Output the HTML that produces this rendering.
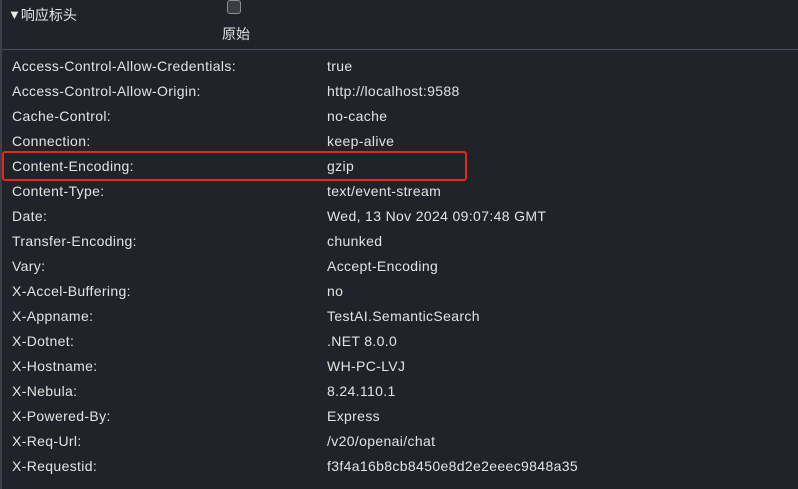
<!DOCTYPE html>
<html><head><meta charset="utf-8"><style>
html,body{margin:0;padding:0;}
body{width:798px;height:489px;background:#202329;position:relative;overflow:hidden;font-family:"Liberation Sans","Noto Sans CJK SC",sans-serif;color:#e3e3e3;font-size:14px;}
.lb{position:absolute;left:0;top:0;width:2px;height:489px;background:#3c4048;}
.hd{position:absolute;left:8px;top:5px;font-size:14px;color:#e8e8e8;}
.cb{position:absolute;left:227px;top:0px;width:12px;height:12px;border:1px solid #8a8d93;border-radius:3px;background:#3a3d44;}
.yuan{position:absolute;left:222px;top:24px;font-size:14px;}
.hr{position:absolute;left:2px;right:0;top:49px;height:1px;background:#4a4f57;}
.row{position:absolute;left:12px;height:20px;line-height:20px;white-space:nowrap;letter-spacing:0.35px;}
.row span{position:absolute;left:315px;}
.box{position:absolute;left:2px;top:151px;width:461px;height:26px;border:2px solid #e8261f;border-radius:3px;}
</style></head><body>
<div class="lb"></div>
<div class="hd"><span style="font-size:13px;position:relative;top:-1px">▼</span>响应标头</div>
<div class="cb"></div>
<div class="yuan">原始</div>
<div class="hr"></div>
<div class="row" style="top:56px">Access-Control-Allow-Credentials:<span>true</span></div>
<div class="row" style="top:81px">Access-Control-Allow-Origin:<span>http://localhost:9588</span></div>
<div class="row" style="top:106px">Cache-Control:<span>no-cache</span></div>
<div class="row" style="top:131px">Connection:<span>keep-alive</span></div>
<div class="row" style="top:156px">Content-Encoding:<span>gzip</span></div>
<div class="row" style="top:181px">Content-Type:<span>text/event-stream</span></div>
<div class="row" style="top:206px">Date:<span>Wed, 13 Nov 2024 09:07:48 GMT</span></div>
<div class="row" style="top:231px">Transfer-Encoding:<span>chunked</span></div>
<div class="row" style="top:256px">Vary:<span>Accept-Encoding</span></div>
<div class="row" style="top:281px">X-Accel-Buffering:<span>no</span></div>
<div class="row" style="top:306px">X-Appname:<span>TestAI.SemanticSearch</span></div>
<div class="row" style="top:331px">X-Dotnet:<span>.NET 8.0.0</span></div>
<div class="row" style="top:356px">X-Hostname:<span>WH-PC-LVJ</span></div>
<div class="row" style="top:381px">X-Nebula:<span>8.24.110.1</span></div>
<div class="row" style="top:406px">X-Powered-By:<span>Express</span></div>
<div class="row" style="top:431px">X-Req-Url:<span>/v20/openai/chat</span></div>
<div class="row" style="top:456px">X-Requestid:<span>f3f4a16b8cb8450e8d2e2eeec9848a35</span></div>
<div class="box"></div>
</body></html>
